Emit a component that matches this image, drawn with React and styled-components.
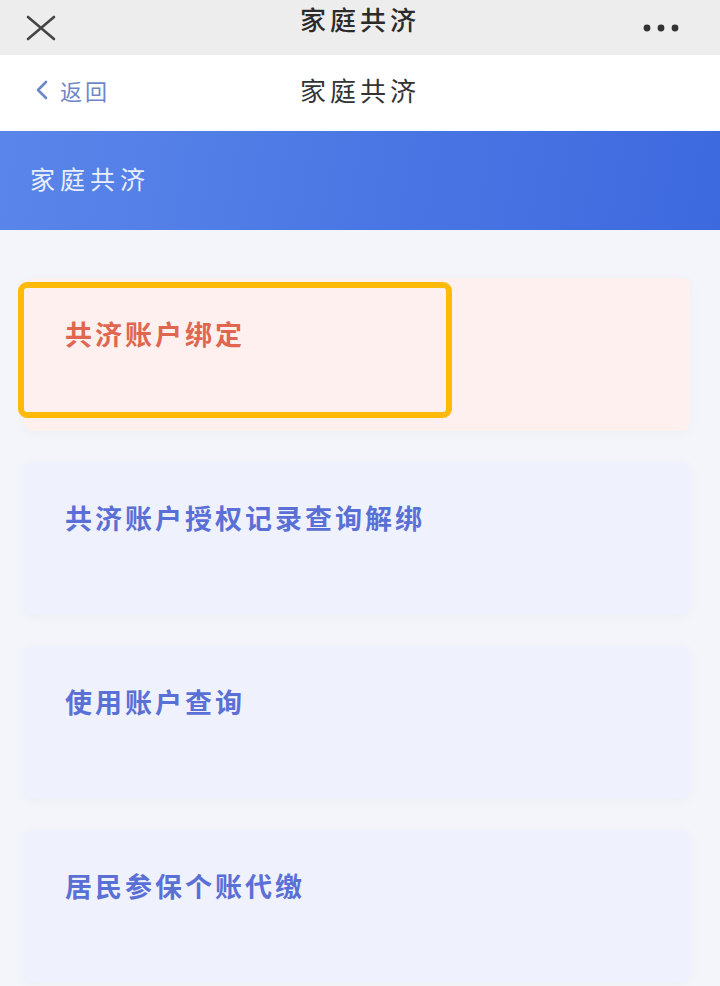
import React from 'react';
import styled, { createGlobalStyle } from 'styled-components';

const GlobalStyle = createGlobalStyle`
  html, body {
    margin: 0;
    padding: 0;
    background: #f3f5fa;
    font-family: "Noto Sans CJK SC", "Noto Sans", sans-serif;
  }
`;

const Page = styled.div`
  width: 720px;
  min-height: 986px;
  background: #f3f5fa;
  overflow: hidden;
`;

const TopBar = styled.div`
  height: 55px;
  background: #ededed;
  display: flex;
  align-items: center;
  justify-content: space-between;
  padding: 0 38px 0 26px;
  box-sizing: border-box;
  position: relative;
`;

const TopTitle = styled.div`
  position: absolute;
  left: 0;
  right: 0;
  top: 0;
  text-align: center;
  font-size: 26px;
  line-height: 38px;
  letter-spacing: 4px;
  font-weight: 500;
  color: #2b2b2b;
  pointer-events: none;
`;

const NavBar = styled.div`
  height: 76px;
  box-sizing: border-box;
  background: #fff;
  display: flex;
  align-items: center;
  padding: 0 36px 7px;
  position: relative;
`;

const Back = styled.div`
  display: flex;
  align-items: center;
  gap: 12px;
  color: #6d87c9;
  font-size: 22px;
  letter-spacing: 3px;
`;

const NavTitle = styled.div`
  position: absolute;
  left: 0;
  right: 0;
  text-align: center;
  font-size: 26px;
  letter-spacing: 4px;
  color: #333;
  pointer-events: none;
`;

const Banner = styled.div`
  height: 99px;
  box-sizing: border-box;
  background: linear-gradient(100deg, #5a86ea 0%, #4b77e4 50%, #3d69df 100%);
  display: flex;
  align-items: center;
  padding: 0 30px 6px;
  color: #e9eefb;
  font-size: 25px;
  letter-spacing: 5px;
`;

const List = styled.div`
  display: flex;
  flex-direction: column;
  gap: 31px;
  padding: 48px 30px 0 24px;
`;

const Card = styled.div`
  position: relative;
  height: 153px;
  box-sizing: border-box;
  padding: 36px 0 0 41px;
  border-radius: 8px;
  background: ${({ $tone }) => ($tone === 'red' ? '#fff0f0' : '#eff2fc')};
  box-shadow: 0 2px 10px rgba(120, 130, 160, 0.06);
`;

const CardText = styled.div`
  font-size: 27px;
  font-weight: 700;
  letter-spacing: 3px;
  color: ${({ $tone }) => ($tone === 'red' ? '#e0664f' : '#5b70d6')};
`;

const Highlight = styled.div`
  position: absolute;
  left: -6px;
  top: 4px;
  width: 434px;
  height: 136px;
  box-sizing: border-box;
  border: 6px solid #fdba09;
  border-radius: 9px;
`;

const items = [
  { label: '共济账户绑定', tone: 'red', highlight: true },
  { label: '共济账户授权记录查询解绑', tone: 'blue' },
  { label: '使用账户查询', tone: 'blue' },
  { label: '居民参保个账代缴', tone: 'blue' },
];

const App = () => {
  return (
    <Page>
      <GlobalStyle />
      <TopBar>
        <svg width="30" height="26" viewBox="0 0 30 26">
          <path d="M2 2 L28 24 M28 2 L2 24" stroke="#444" strokeWidth="2.6" strokeLinecap="round" />
        </svg>
        <TopTitle>家庭共济</TopTitle>
        <svg width="40" height="10" viewBox="0 0 40 10">
          <circle cx="5" cy="5" r="3.4" fill="#333" />
          <circle cx="19" cy="5" r="3.4" fill="#333" />
          <circle cx="33" cy="5" r="3.4" fill="#333" />
        </svg>
      </TopBar>
      <NavBar>
        <Back>
          <svg width="12" height="20" viewBox="0 0 12 20">
            <path d="M10 2 L2 10 L10 18" stroke="#6d87c9" strokeWidth="2.6" fill="none" strokeLinecap="round" strokeLinejoin="round" />
          </svg>
          返回
        </Back>
        <NavTitle>家庭共济</NavTitle>
      </NavBar>
      <Banner>家庭共济</Banner>
      <List>
        {items.map((item) => (
          <Card key={item.label} $tone={item.tone}>
            {item.highlight && <Highlight />}
            <CardText $tone={item.tone}>{item.label}</CardText>
          </Card>
        ))}
      </List>
    </Page>
  );
};

export default App;
